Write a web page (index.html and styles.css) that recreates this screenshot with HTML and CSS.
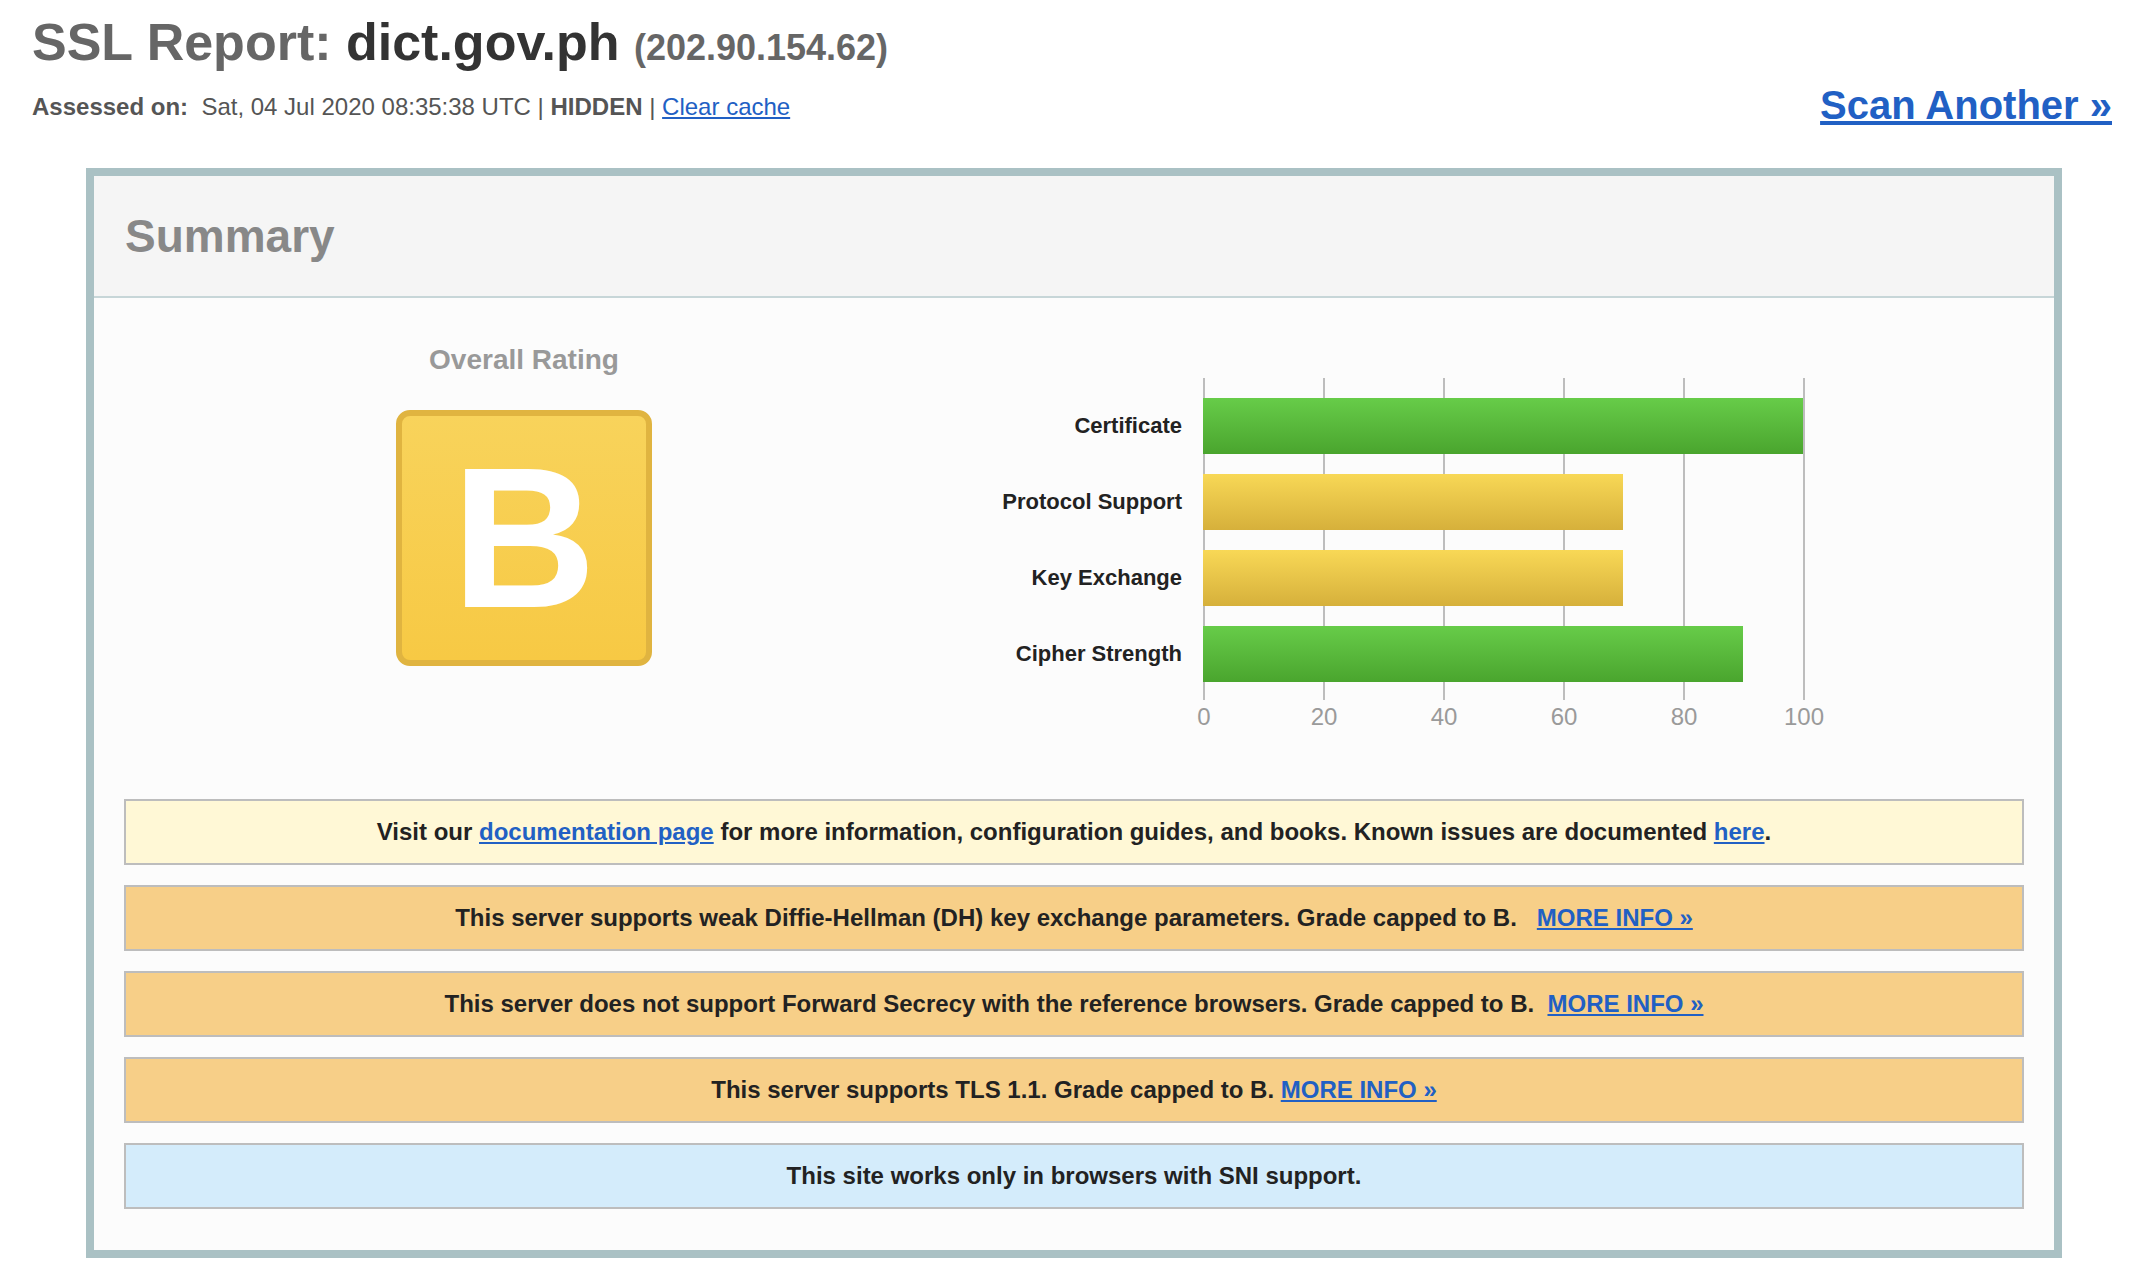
FILE: index.html
```html
<!DOCTYPE html>
<html lang="en">
<head>
<meta charset="utf-8">
<title>SSL Report: dict.gov.ph</title>
<link rel="stylesheet" href="styles.css">
</head>
<body>
<div class="header">
  <div class="title-block">
    <h1 class="report-title"><span class="t-label">SSL Report:</span> <span class="t-host">dict.gov.ph</span> <span class="t-ip">(202.90.154.62)</span></h1>
    <div class="assessed"><b>Assessed on:</b>&nbsp; Sat, 04 Jul 2020 08:35:38 UTC | <b>HIDDEN</b> | <a href="#">Clear cache</a></div>
  </div>
  <a class="scan-another" href="#">Scan Another &raquo;</a>
</div>

<div class="report">
  <div class="report-head">Summary</div>
  <div class="report-body">
    <div class="overview">
      <div class="rating">
        <div class="rating-title">Overall Rating</div>
        <div class="grade">B</div>
      </div>
      <div class="chart">
        <div class="chart-labels">
          <div class="chart-label">Certificate</div>
          <div class="chart-label">Protocol Support</div>
          <div class="chart-label">Key Exchange</div>
          <div class="chart-label">Cipher Strength</div>
        </div>
        <div class="chart-main">
          <div class="plot">
            <div class="bar bar-green" style="width:600px"></div>
            <div class="bar bar-yellow" style="width:420px"></div>
            <div class="bar bar-yellow" style="width:420px"></div>
            <div class="bar bar-green" style="width:540px"></div>
          </div>
          <div class="axis">
            <span class="tick">0</span>
            <span class="tick">20</span>
            <span class="tick">40</span>
            <span class="tick">60</span>
            <span class="tick">80</span>
            <span class="tick">100</span>
          </div>
        </div>
      </div>
    </div>
    <div class="messages">
      <div class="msg msg-info">Visit our <a href="#">documentation page</a> for more information, configuration guides, and books. Known issues are documented <a href="#">here</a>.</div>
      <div class="msg msg-warn">This server supports weak Diffie-Hellman (DH) key exchange parameters. Grade capped to B.&nbsp;&nbsp; <a href="#">MORE INFO &raquo;</a></div>
      <div class="msg msg-warn">This server does not support Forward Secrecy with the reference browsers. Grade capped to B.&nbsp; <a href="#">MORE INFO &raquo;</a></div>
      <div class="msg msg-warn">This server supports TLS 1.1. Grade capped to B. <a href="#">MORE INFO &raquo;</a></div>
      <div class="msg msg-note">This site works only in browsers with SNI support.</div>
    </div>
  </div>
</div>
</body>
</html>
```

FILE: styles.css
```css
* { box-sizing: border-box; }

body {
  margin: 0;
  background: #ffffff;
  font-family: "Liberation Sans", Arial, sans-serif;
  color: #222;
}

a { color: #2160c4; text-decoration: underline; }

.header {
  height: 168px;
  padding: 12px 40px 0 32px;
  display: flex;
  justify-content: space-between;
  align-items: flex-start;
}

.report-title {
  margin: 0;
  font-size: 52px;
  line-height: 60px;
  font-weight: bold;
  white-space: nowrap;
}

.t-label { color: #666; }
.t-host { color: #333; }
.t-ip { color: #666; font-size: 36px; }

.assessed {
  margin-top: 14px;
  font-size: 24px;
  line-height: 30px;
  color: #555;
  white-space: nowrap;
}

.scan-another {
  margin-top: 69px;
  font-size: 40px;
  line-height: 48px;
  font-weight: bold;
  color: #2160c4;
  white-space: nowrap;
}

.report {
  margin: 0 90px 0 86px;
  border: 8px solid #aac1c4;
}

.report-head {
  height: 122px;
  padding-left: 31px;
  background: #f5f5f5;
  border-bottom: 2px solid #c7d6d8;
  display: flex;
  align-items: center;
  font-size: 46px;
  font-weight: bold;
  color: #888;
}

.report-body {
  background: #fcfcfc;
  padding: 0 30px 41px;
}

.overview {
  display: flex;
  padding-bottom: 68px;
}

.rating {
  width: 800px;
  padding-top: 46px;
  display: flex;
  flex-direction: column;
  align-items: center;
}

.rating-title {
  font-size: 28px;
  line-height: 32px;
  font-weight: bold;
  color: #999;
}

.grade {
  margin-top: 34px;
  width: 256px;
  height: 256px;
  border: 6px solid #e0b440;
  border-radius: 14px;
  background: linear-gradient(#f8d35b, #f7c944);
  display: flex;
  align-items: center;
  justify-content: center;
  font-size: 200px;
  line-height: 200px;
  font-weight: bold;
  color: #ffffff;
}

.chart {
  display: flex;
  gap: 21px;
  margin-top: 80px;
}

.chart-labels {
  width: 258px;
  padding-top: 20px;
  display: flex;
  flex-direction: column;
  gap: 20px;
}

.chart-label {
  height: 56px;
  line-height: 56px;
  text-align: right;
  font-size: 22px;
  font-weight: bold;
  color: #222;
  white-space: nowrap;
}

.chart-main { width: 602px; }

.plot {
  height: 322px;
  padding: 20px 0 18px;
  display: flex;
  flex-direction: column;
  gap: 20px;
  background: repeating-linear-gradient(to right, #bdbdbd 0, #bdbdbd 2px, transparent 2px, transparent 120px);
}

.bar { height: 56px; }
.bar-green { background: linear-gradient(#67cc49, #4aa52e); }
.bar-yellow { background: linear-gradient(#f8d856, #d6b03b); }

.axis {
  display: flex;
  margin: 3px -59px 0 -59px;
}

.tick {
  width: 120px;
  text-align: center;
  font-size: 24px;
  line-height: 28px;
  color: #9a9a9a;
}

.messages {
  display: flex;
  flex-direction: column;
  gap: 20px;
}

.msg {
  height: 66px;
  border: 2px solid #bdbdbd;
  text-align: center;
  line-height: 62px;
  font-size: 24px;
  font-weight: bold;
  color: #222;
  white-space: nowrap;
}

.msg-info { background: #fff8d6; }
.msg-warn { background: #f7cf88; }
.msg-note { background: #d4ecfb; }
```
